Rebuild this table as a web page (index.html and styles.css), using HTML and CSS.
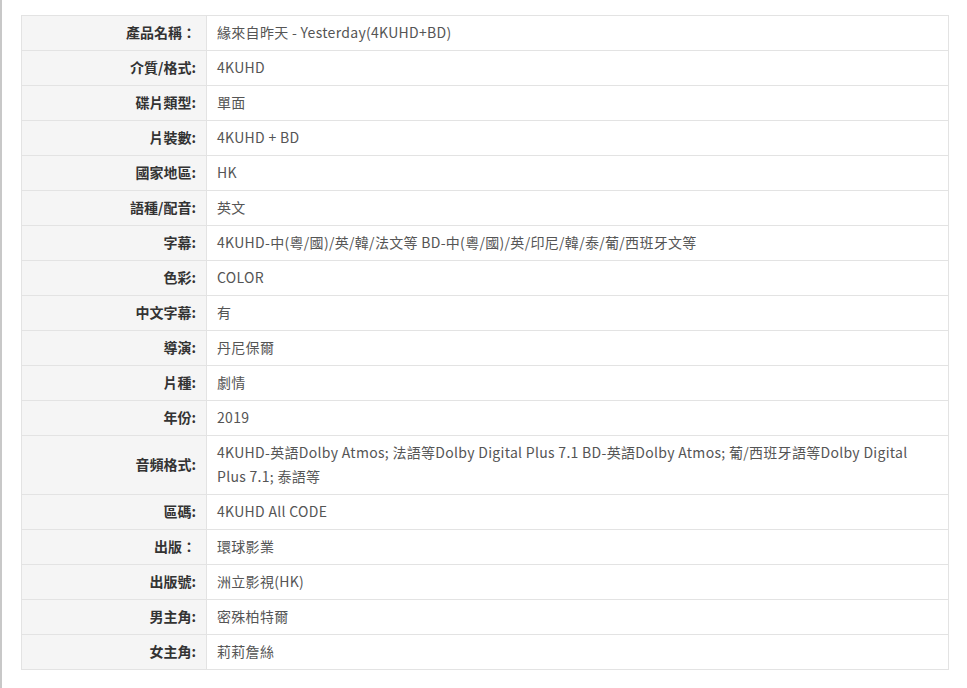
FILE: index.html
```html
<!DOCTYPE html>
<html lang="zh-Hant">
<head>
    <meta charset="UTF-8">
    <meta name="viewport" content="width=device-width, initial-scale=1.0">
    <title>產品資料</title>
    <link rel="stylesheet" href="styles.css">
</head>
<body>
    <div class="page">
        <table class="spec">
            <tr><th>產品名稱：</th><td>緣來自昨天 - Yesterday(4KUHD+BD)</td></tr>
            <tr><th>介質/格式:</th><td>4KUHD</td></tr>
            <tr><th>碟片類型:</th><td>單面</td></tr>
            <tr><th>片裝數:</th><td>4KUHD + BD</td></tr>
            <tr><th>國家地區:</th><td>HK</td></tr>
            <tr><th>語種/配音:</th><td>英文</td></tr>
            <tr><th>字幕:</th><td>4KUHD-中(粵/國)/英/韓/法文等 BD-中(粵/國)/英/印尼/韓/泰/葡/西班牙文等</td></tr>
            <tr><th>色彩:</th><td>COLOR</td></tr>
            <tr><th>中文字幕:</th><td>有</td></tr>
            <tr><th>導演:</th><td>丹尼保爾</td></tr>
            <tr><th>片種:</th><td>劇情</td></tr>
            <tr><th>年份:</th><td>2019</td></tr>
            <tr><th>音頻格式:</th><td>4KUHD-英語Dolby Atmos; 法語等Dolby Digital Plus 7.1 BD-英語Dolby Atmos; 葡/西班牙語等Dolby Digital Plus 7.1; 泰語等</td></tr>
            <tr><th>區碼:</th><td>4KUHD All CODE</td></tr>
            <tr><th>出版：</th><td>環球影業</td></tr>
            <tr><th>出版號:</th><td>洲立影視(HK)</td></tr>
            <tr><th>男主角:</th><td>密殊柏特爾</td></tr>
            <tr><th>女主角:</th><td>莉莉詹絲</td></tr>
        </table>
    </div>
</body>
</html>
```

FILE: styles.css
```css
html, body {
    margin: 0;
    padding: 0;
    background: #fff;
}
body {
    font-family: "Noto Sans CJK TC", "Noto Sans", sans-serif;
    font-size: 14px;
    color: #555;
}
.page {
    min-height: 688px;
    box-sizing: border-box;
    border-left: 2px solid #c8c8c8;
    padding: 15px 0 0 19px;
}
.spec {
    width: 928px;
    border-collapse: collapse;
    table-layout: fixed;
}
.spec th,
.spec td {
    border: 1px solid #e3e3e3;
    padding: 4px 10px 6px;
    line-height: 24px;
    vertical-align: middle;
}
.spec th {
    width: 164px;
    background: #f5f5f5;
    color: #333;
    font-weight: bold;
    text-align: right;
}
.spec td {
    letter-spacing: 0.3px;
    text-align: left;
}
```
